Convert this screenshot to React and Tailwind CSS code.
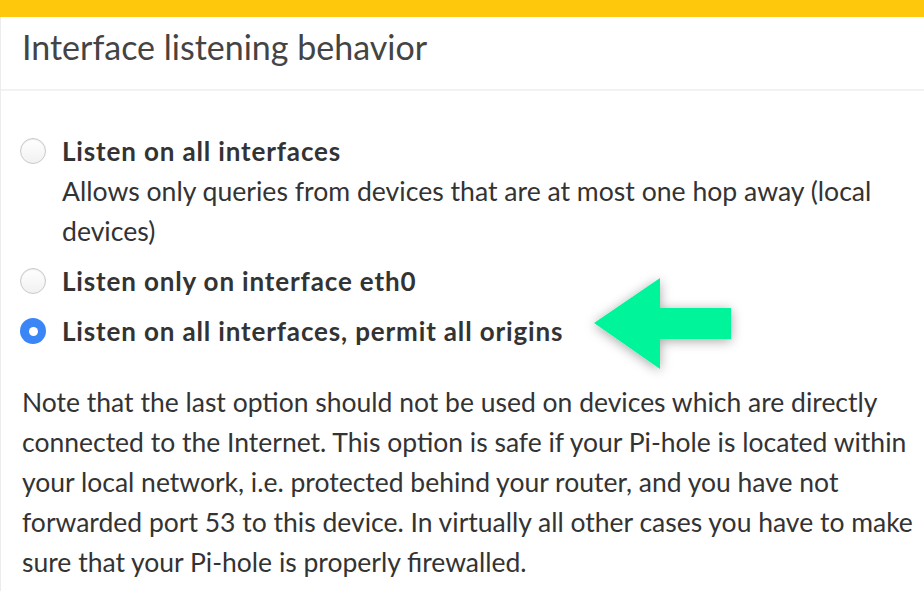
const font = { fontFamily: 'Lato, "Open Sans", sans-serif' }

function Radio({ checked }) {
  if (checked) {
    return (
      <span className="flex h-[26px] w-[26px] shrink-0 items-center justify-center rounded-full bg-[#3b86f7]">
        <span className="h-[9px] w-[9px] rounded-full bg-white" />
      </span>
    )
  }
  return (
    <span className="block h-[26px] w-[26px] shrink-0 rounded-full border border-[#c9c9c9] bg-gradient-to-b from-white to-[#f1f1f1] shadow-[inset_0_1px_1px_rgba(0,0,0,0.08)]" />
  )
}

function Option({ checked, label, children }) {
  return (
    <div className="mb-[10px] flex items-start gap-[16px] pl-[19px]">
      <div className="flex h-[40px] items-center">
        <Radio checked={checked} />
      </div>
      <div>
        <div className="text-[26px] font-bold leading-[40px] tracking-[0.85px] text-[#333]">{label}</div>
        {children && <div className="text-[26.6px] leading-[40px] text-[#333]">{children}</div>}
      </div>
    </div>
  )
}

function Arrow() {
  return (
    <svg width="170" height="120" viewBox="0 0 170 120" className="overflow-visible">
      <defs>
        <filter id="sh" x="-30%" y="-30%" width="160%" height="160%">
          <feDropShadow dx="0" dy="2" stdDeviation="6" floodColor="#000" floodOpacity="0.35" />
        </filter>
      </defs>
      <polygon
        points="13,52 79,7 79,37 150,37 150,68 79,68 79,98"
        fill="#00f59a"
        filter="url(#sh)"
      />
    </svg>
  )
}

export default function App() {
  return (
    <div className="flex h-[591px] w-[924px] flex-col overflow-hidden bg-white" style={font}>
      <div className="h-[17px] shrink-0 bg-[#fec80c]" />
      <div className="flex-1 border-l border-[#ececec]">
        <div className="h-[74px] border-b-[2px] border-[#f2f2f2] pl-[21px] pt-[8px]">
          <h3 className="text-[34px] font-normal leading-[44px] text-[#444]">Interface listening behavior</h3>
        </div>
        <div className="pt-[40px]">
          <Option label="Listen on all interfaces">
            Allows only queries from devices that are at most one hop away (local devices)
          </Option>
          <Option label="Listen only on interface eth0" />
          <div className="relative">
            <Option checked label="Listen on all interfaces, permit all origins" />
            <div className="absolute left-[580px] top-[-40px]">
              <Arrow />
            </div>
          </div>
          <p className="mt-[31px] pl-[21px] pr-[8px] text-[26.5px] leading-[40px] text-[#333]">
            Note that the last option should not be used on devices which are directly connected to the Internet. This option is safe if your Pi-hole is located within your local network, i.e. protected behind your router, and you have not forwarded port 53 to this device. In virtually all other cases you have to make sure that your Pi-hole is properly firewalled.
          </p>
        </div>
      </div>
    </div>
  )
}
